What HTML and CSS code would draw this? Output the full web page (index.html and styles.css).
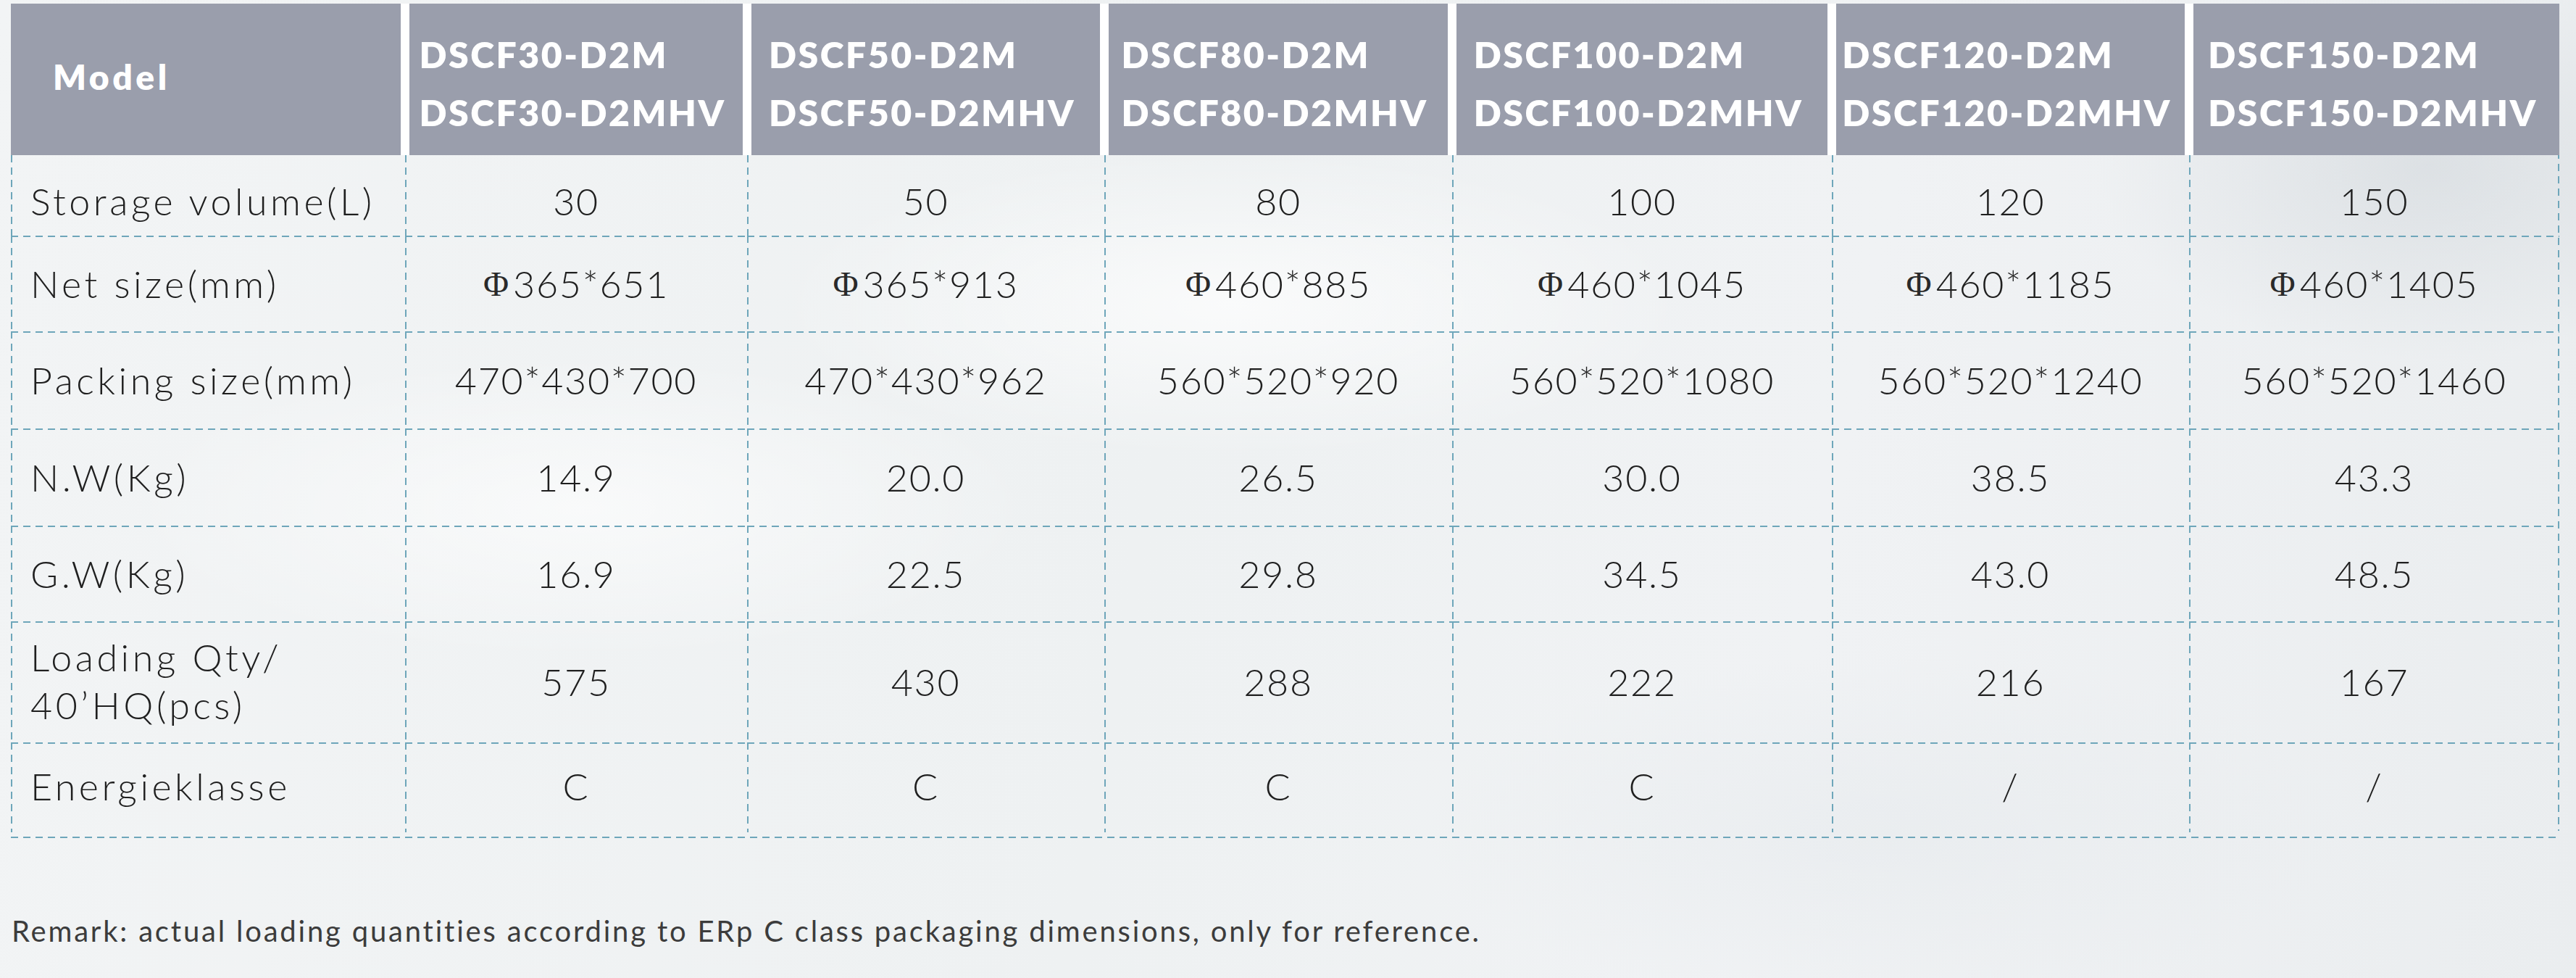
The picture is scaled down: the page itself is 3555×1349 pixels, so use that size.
FILE: index.html
```html
<!DOCTYPE html>
<html lang="en">
<head>
<meta charset="utf-8">
<title>DSCF-D2M specification</title>
<link rel="stylesheet" href="styles.css">
</head>
<body>
<main class="page">
  <section class="spec">
    <div class="head head-first"><div class="head-box model-title">Model</div></div>
    <div class="head"><div class="head-box"><div class="models"><span>DSCF30-D2M</span><span>DSCF30-D2MHV</span></div></div></div>
    <div class="head"><div class="head-box"><div class="models"><span>DSCF50-D2M</span><span>DSCF50-D2MHV</span></div></div></div>
    <div class="head"><div class="head-box"><div class="models"><span>DSCF80-D2M</span><span>DSCF80-D2MHV</span></div></div></div>
    <div class="head"><div class="head-box"><div class="models"><span>DSCF100-D2M</span><span>DSCF100-D2MHV</span></div></div></div>
    <div class="head"><div class="head-box"><div class="models"><span>DSCF120-D2M</span><span>DSCF120-D2MHV</span></div></div></div>
    <div class="head head-last"><div class="head-box"><div class="models"><span>DSCF150-D2M</span><span>DSCF150-D2MHV</span></div></div></div>

    <div class="cell label no-top r1">Storage volume(L)</div>
    <div class="cell no-top r1">30</div>
    <div class="cell no-top r1">50</div>
    <div class="cell no-top r1">80</div>
    <div class="cell no-top r1">100</div>
    <div class="cell no-top r1">120</div>
    <div class="cell no-top r1">150</div>

    <div class="cell label">Net size(mm)</div>
    <div class="cell"><span class="phi">Φ</span>365*651</div>
    <div class="cell"><span class="phi">Φ</span>365*913</div>
    <div class="cell"><span class="phi">Φ</span>460*885</div>
    <div class="cell"><span class="phi">Φ</span>460*1045</div>
    <div class="cell"><span class="phi">Φ</span>460*1185</div>
    <div class="cell"><span class="phi">Φ</span>460*1405</div>

    <div class="cell label">Packing size(mm)</div>
    <div class="cell">470*430*700</div>
    <div class="cell">470*430*962</div>
    <div class="cell">560*520*920</div>
    <div class="cell">560*520*1080</div>
    <div class="cell">560*520*1240</div>
    <div class="cell">560*520*1460</div>

    <div class="cell label">N.W(Kg)</div>
    <div class="cell">14.9</div>
    <div class="cell">20.0</div>
    <div class="cell">26.5</div>
    <div class="cell">30.0</div>
    <div class="cell">38.5</div>
    <div class="cell">43.3</div>

    <div class="cell label">G.W(Kg)</div>
    <div class="cell">16.9</div>
    <div class="cell">22.5</div>
    <div class="cell">29.8</div>
    <div class="cell">34.5</div>
    <div class="cell">43.0</div>
    <div class="cell">48.5</div>

    <div class="cell label two-line">Loading Qty/<br>40’HQ(pcs)</div>
    <div class="cell">575</div>
    <div class="cell">430</div>
    <div class="cell">288</div>
    <div class="cell">222</div>
    <div class="cell">216</div>
    <div class="cell">167</div>

    <div class="cell label r7">Energieklasse</div>
    <div class="cell r7">C</div>
    <div class="cell r7">C</div>
    <div class="cell r7">C</div>
    <div class="cell r7">C</div>
    <div class="cell r7">/</div>
    <div class="cell r7">/</div>
  </section>
  <p class="remark">Remark: actual loading quantities according to ERp C class packaging dimensions, only for reference.</p>
</main>
</body>
</html>
```
FILE: styles.css
```css
:root {
  --dash: #6ea6ba;
  --head: #9a9eac;
  --ink: #1f1f1f;
}

html, body {
  margin: 0;
  padding: 0;
}

body {
  width: 3555px;
  height: 1349px;
  overflow: hidden;
  font-family: "Lato", "Liberation Sans", sans-serif;
  color: var(--ink);
  background-color: #eff2f3;
  background-image:
    radial-gradient(ellipse 650px 380px at 3350px 230px, rgba(205, 211, 216, 0.5), rgba(205, 211, 216, 0) 70%),
    radial-gradient(ellipse 900px 300px at 1700px 420px, rgba(255, 255, 255, 0.7), rgba(255, 255, 255, 0) 70%),
    radial-gradient(ellipse 900px 300px at 800px 700px, rgba(255, 255, 255, 0.6), rgba(255, 255, 255, 0) 70%),
    radial-gradient(ellipse 900px 350px at 2600px 1150px, rgba(230, 234, 237, 0.6), rgba(230, 234, 237, 0) 70%),
    linear-gradient(100deg, #f2f4f5 0%, #eef1f2 45%, #f0f2f4 70%, #eaedef 100%);
}

.page {
  padding: 5px 0 0 15px;
}

.spec {
  display: grid;
  width: 3517px;
  grid-template-columns: 544px 472px 493px 480px 524px 493px 511px;
  grid-template-rows: 209px 111px 132px 134px 134px 132px 167px 132px;
  background-image:
    repeating-linear-gradient(180deg, var(--dash) 0 10px, transparent 10px 17px),
    repeating-linear-gradient(90deg, var(--dash) 0 10px, transparent 10px 17px);
  background-size: 2px calc(100% - 10px), 100% 2px;
  background-position: right top, left bottom;
  background-repeat: no-repeat;
}

.head {
  background: #ffffff;
  padding: 0 6px;
  position: relative;
  z-index: 1;
}

.head-first {
  padding-left: 0;
}

.head-last {
  padding-right: 0;
}

.head-box {
  height: 100%;
  background: var(--head);
  color: #ffffff;
  display: flex;
  align-items: center;
  justify-content: center;
  box-sizing: border-box;
  padding: 10px 10px 0 0;
}

.model-title {
  justify-content: flex-start;
  padding: 0 0 8px 58px;
  font-weight: 800;
  font-size: 48px;
  letter-spacing: 4.5px;
}

.models {
  display: flex;
  flex-direction: column;
  font-weight: 800;
  font-size: 50px;
  line-height: 80px;
  letter-spacing: 2.5px;
  white-space: nowrap;
}

.cell {
  display: flex;
  align-items: center;
  justify-content: center;
  font-weight: 300;
  font-size: 52px;
  line-height: 53px;
  letter-spacing: 1.7px;
  white-space: nowrap;
  background-image:
    repeating-linear-gradient(90deg, var(--dash) 0 10px, transparent 10px 17px),
    repeating-linear-gradient(180deg, var(--dash) 0 10px, transparent 10px 17px);
  background-size: 100% 2px, 2px 100%;
  background-position: left top, left top;
  background-repeat: no-repeat;
}

.cell.no-top {
  background-size: 0 0, 2px 100%;
}

.r1 {
  padding-top: 16px;
}

.r7 {
  padding-bottom: 12px;
  background-size: 100% 2px, 2px calc(100% - 8px);
}

.label {
  justify-content: flex-start;
  padding-left: 27px;
  letter-spacing: 4.5px;
}

.two-line {
  white-space: normal;
  line-height: 66px;
  padding-bottom: 4px;
}

.phi {
  font-family: "Liberation Serif", "DejaVu Serif", serif;
  font-weight: 400;
  font-size: 48px;
  margin-right: 6px;
  letter-spacing: 0;
  color: #2a2a2a;
}

.remark {
  margin: 104px 0 0 1px;
  font-size: 40px;
  font-weight: 400;
  letter-spacing: 2.8px;
  color: #3c3c3c;
  line-height: 48px;
}
```
